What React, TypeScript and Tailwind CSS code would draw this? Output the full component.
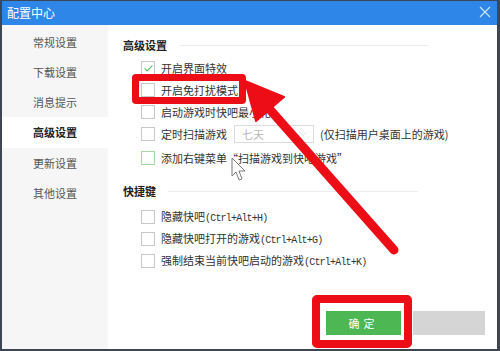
import { Check, ChevronDown } from 'lucide-react';

const navItems = ['常规设置', '下载设置', '消息提示', '高级设置', '更新设置', '其他设置'];

function Box({ checked, green }: { checked?: boolean; green?: boolean }) {
  return (
    <span
      className={`mr-[6px] flex size-[14px] shrink-0 items-center justify-center border bg-white ${
        green ? 'border-[#a9d8a6]' : 'border-[#c9c9c9]'
      }`}
    >
      {checked && <Check size={11} strokeWidth={2.2} className="text-[#3fae49]" />}
    </span>
  );
}

function Row({
  children,
  checked,
  green,
  className = '',
}: {
  children: React.ReactNode;
  checked?: boolean;
  green?: boolean;
  className?: string;
}) {
  return (
    <div className={`flex h-[22px] items-center pl-[18px] ${className}`}>
      <Box checked={checked} green={green} />
      <span className="whitespace-nowrap">{children}</span>
    </div>
  );
}

function Keys({ children }: { children: string }) {
  return (
    <span className="font-['Liberation_Mono',monospace] text-[10px] tracking-[-0.8px]">
      {children}
    </span>
  );
}

function Heading({ title, className = '' }: { title: string; className?: string }) {
  return (
    <div className={`flex h-[16px] items-center ${className}`}>
      <span className="font-bold text-[#222]">{title}</span>
      <span className="ml-[12px] h-px w-[250px] bg-[#ededed]" />
    </div>
  );
}

export default function App() {
  return (
    <div className="relative h-[351px] w-[500px] overflow-hidden bg-[#3d4652] font-['Noto_Sans_CJK_SC',sans-serif] text-[11px] text-[#333]">
      <div className="absolute inset-[1px_3px_2px_2px] flex flex-col bg-white">
        <div className="flex h-[24px] items-center justify-between bg-[#2d86e8] pl-[5px] pr-[6px] text-[12px] text-white">
          <span>配置中心</span>
          <svg width="12" height="12" viewBox="0 0 12 12" className="mb-[2px]">
            <path d="M1 1L11 11M11 1L1 11" stroke="#d2e6fb" strokeWidth="1.1" />
          </svg>
        </div>
        <div className="flex flex-1">
          <div className="w-[106px] bg-[#f6f6f6] pt-[2px]">
            {navItems.map((item) => (
              <div
                key={item}
                className={`flex h-[30px] items-center justify-center ${
                  item === '高级设置' ? 'h-[31px] bg-white font-bold text-[#222]' : 'text-[#555]'
                }`}
              >
                {item}
              </div>
            ))}
          </div>
          <div className="flex flex-1 flex-col pl-[15px] pt-[12px]">
            <Heading title="高级设置" />
            <div className="mt-[4px]">
              <Row checked>开启界面特效</Row>
              <Row>开启免打扰模式</Row>
              <Row>启动游戏时快吧最小化</Row>
              <div className="flex h-[22px] items-center pl-[18px]">
                <Box />
                <span>定时扫描游戏</span>
                <div className="ml-[7px] flex h-[18px] w-[80px] items-center justify-between border border-[#dcdcdc] pl-[7px] pr-[4px] text-[#b8b8b8]">
                  <span>七天</span>
                  <ChevronDown size={12} strokeWidth={1.2} className="text-[#c8c8c8]" />
                </div>
                <span className="ml-[6px]">(仅扫描用户桌面上的游戏)</span>
              </div>
              <Row green className="mt-[2px]">
                添加右键菜单“扫描游戏到快吧游戏”
              </Row>
            </div>
            <Heading title="快捷键" className="mt-[14px]" />
            <div className="mt-[7px]">
              <Row>
                隐藏快吧<Keys>(Ctrl+Alt+H)</Keys>
              </Row>
              <Row>
                隐藏快吧打开的游戏<Keys>(Ctrl+Alt+G)</Keys>
              </Row>
              <Row>
                强制结束当前快吧启动的游戏<Keys>(Ctrl+Alt+K)</Keys>
              </Row>
            </div>
            <div className="mt-auto flex justify-end gap-[12px] pb-[14px] pr-[12px]">
              <button className="h-[24px] w-[75px] bg-[#4cb753] text-[11px] tracking-[4px] text-white">
                确定
              </button>
              <button className="h-[24px] w-[72px] bg-[#d5d5d5]" />
            </div>
          </div>
        </div>
      </div>

      {/* annotations drawn over the screenshot */}
      <div className="absolute left-[132px] top-[74px] h-[30px] w-[114px] rounded-[4px] border-[7px] border-[#ec0d16]" />
      <div className="absolute left-[312px] top-[295px] h-[53px] w-[100px] rounded-[5px] border-[8px] border-[#ec0d16]" />
      <svg className="pointer-events-none absolute left-0 top-0" width="500" height="351">
        <line x1="394" y1="250" x2="265" y2="104" stroke="#ec0d16" strokeWidth="9" strokeLinecap="round" />
        <polygon points="245,81 284,97 256,121" fill="#ec0d16" stroke="#ec0d16" strokeWidth="2" strokeLinejoin="round" />
        <path
          d="M232 158 L232 176 L236 172 L239 180 L242 179 L239 171 L245 171 Z"
          fill="#fff"
          stroke="#7a7a7a"
          strokeWidth="1"
          strokeLinejoin="round"
        />
      </svg>
    </div>
  );
}
